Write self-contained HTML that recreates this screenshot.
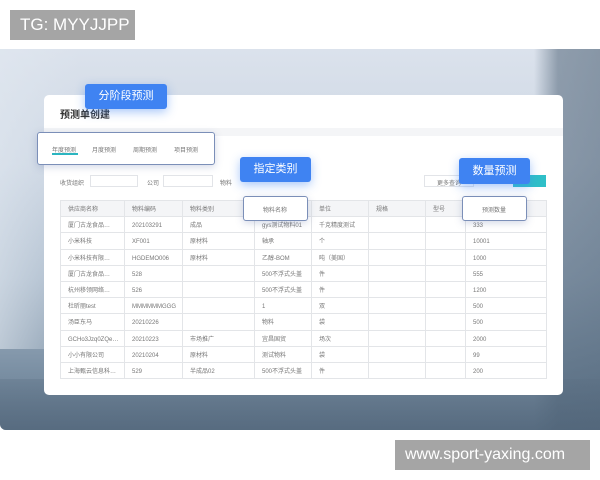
<!DOCTYPE html>
<html><head><meta charset="utf-8"><style>
*{margin:0;padding:0;box-sizing:border-box}
body{width:600px;height:480px;background:#fff;position:relative;overflow:hidden;font-family:"Liberation Sans","Noto Sans CJK SC",sans-serif}
.photo{position:absolute;left:0;top:49px;width:600px;height:381px;border-radius:0 0 0 6px;overflow:hidden;
background:linear-gradient(180deg,#dbe2ec 0%,#ccd6e3 30%,#a9b9ca 60%,#7a8fa3 85%,#62778c 100%)}
.photo .r{position:absolute;right:0;top:0;width:120px;height:381px;background:linear-gradient(90deg,rgba(90,110,130,0) 0%,rgba(90,110,130,0) 45%,rgba(80,100,120,.55) 65%,rgba(80,100,120,.6) 100%);}
.photo .l{position:absolute;left:0;top:0;width:80px;height:300px;background:linear-gradient(90deg,rgba(225,232,240,.6),rgba(225,232,240,0))}
.photo .b{position:absolute;left:0;top:330px;width:600px;height:51px;background:linear-gradient(180deg,rgba(90,110,130,.3),rgba(80,100,120,.6))}
.wm{position:absolute;background:#a5a5a5;color:#fff;font-size:17px;line-height:30px;padding-left:10px}
.card{position:absolute;left:44px;top:95px;width:519px;height:300px;background:#fff;border-radius:5px}
.band{position:absolute;left:44px;top:128px;width:519px;height:8px;background:#f4f5f7}
.t{position:absolute;font-size:6px;color:#777;white-space:nowrap}
.tag{position:absolute;background:#3f83f2;color:#fff;font-size:11px;text-align:center;border-radius:3px;box-shadow:0 3px 10px rgba(63,131,242,.45)}
.ob{position:absolute;background:#fff;border:1px solid #7b8fb8;border-radius:3px;box-shadow:0 2px 8px rgba(80,100,160,.25)}
table{position:absolute;left:60px;top:200px;border-collapse:collapse;font-size:6px;color:#777;table-layout:fixed;width:486px}
td{border:1px solid #e3e5e8;height:16.2px;line-height:10px;padding:3px 0 0 7px;vertical-align:middle;white-space:nowrap;overflow:hidden}
tr.h td{background:#f4f5f7}
.inp{position:absolute;border:1px solid #e2e4e8;background:#fff;height:12px}
</style></head><body>
<div class="wm" style="left:10px;top:10px;width:125px;">TG: MYYJJPP</div>
<div class="photo"><div class="l"></div><div class="r"></div><div class="b"></div></div>
<div class="card"></div>
<div class="band"></div>
<div class="t" style="left:60px;top:106px;font-size:10px;color:#333;font-weight:bold">预测单创建</div>
<div class="ob" style="left:37px;top:132px;width:178px;height:33px;"></div>
<div class="t" style="left:52px;top:145px">年度预测</div>
<div style="position:absolute;left:52px;top:153px;width:26px;height:1.5px;background:#2bb5c0"></div>
<div class="t" style="left:92px;top:145px">月度预测</div>
<div class="t" style="left:133px;top:145px">周期预测</div>
<div class="t" style="left:174px;top:145px">项目预测</div>
<div class="t" style="left:60px;top:178px">收货组织</div>
<div class="inp" style="left:90px;top:175px;width:48px"></div>
<div class="t" style="left:147px;top:178px">公司</div>
<div class="inp" style="left:163px;top:175px;width:50px"></div>
<div class="t" style="left:220px;top:178px">物料</div>
<div class="inp" style="left:424px;top:175px;width:50px"></div>
<div class="t" style="left:437px;top:178px">更多查询</div>
<div style="position:absolute;left:513px;top:175px;width:33px;height:12px;background:#2fbfc8"></div>
<table>
<colgroup><col style="width:64px"><col style="width:58px"><col style="width:72px"><col style="width:57px"><col style="width:57px"><col style="width:57px"><col style="width:40px"><col style="width:81px"></colgroup>
<tr class="h"><td>供应商名称</td><td>物料编码</td><td>物料类别</td><td>物料名称</td><td>单位</td><td>规格</td><td>型号</td><td>预测数量</td></tr>
<tr><td>厦门古龙食品…</td><td>202103291</td><td>成品</td><td>gys测试物料01</td><td>千克精度测试</td><td></td><td></td><td>333</td></tr>
<tr><td>小米科技</td><td>XF001</td><td>原材料</td><td>轴承</td><td>个</td><td></td><td></td><td>10001</td></tr>
<tr><td>小米科技有限…</td><td>HGDEMO006</td><td>原材料</td><td>乙醇-BOM</td><td>吨（美国）</td><td></td><td></td><td>1000</td></tr>
<tr><td>厦门古龙食品…</td><td>528</td><td></td><td>500不浮式头盖</td><td>件</td><td></td><td></td><td>555</td></tr>
<tr><td>杭州移领网络…</td><td>526</td><td></td><td>500不浮式头盖</td><td>件</td><td></td><td></td><td>1200</td></tr>
<tr><td>杜昕丽test</td><td>MMMMMMGGG</td><td></td><td>1</td><td>双</td><td></td><td></td><td>500</td></tr>
<tr><td>汤臣东马</td><td>20210226</td><td></td><td>物料</td><td>袋</td><td></td><td></td><td>500</td></tr>
<tr><td>GCHo3Jzq0ZQe…</td><td>20210223</td><td>市场推广</td><td>宜昌国贸</td><td>场次</td><td></td><td></td><td>2000</td></tr>
<tr><td>小小有限公司</td><td>20210204</td><td>原材料</td><td>测试物料</td><td>袋</td><td></td><td></td><td>99</td></tr>
<tr><td>上海甄云信息科…</td><td>529</td><td>半成品02</td><td>500不浮式头盖</td><td>件</td><td></td><td></td><td>200</td></tr>
</table>
<div class="ob" style="left:243px;top:196px;width:65px;height:25px;"></div>
<div class="t" style="left:263px;top:205px">物料名称</div>
<div class="ob" style="left:462px;top:196px;width:65px;height:25px;"></div>
<div class="t" style="left:482px;top:205px">预测数量</div>
<div class="tag" style="left:85px;top:84px;width:82px;height:25px;line-height:25px">分阶段预测</div>
<div class="tag" style="left:240px;top:157px;width:71px;height:25px;line-height:25px">指定类别</div>
<div class="tag" style="left:459px;top:158px;width:71px;height:26px;line-height:26px">数量预测</div>
<div class="wm" style="left:395px;top:440px;width:195px;font-size:16px">www.sport-yaxing.com</div>
</body></html>
